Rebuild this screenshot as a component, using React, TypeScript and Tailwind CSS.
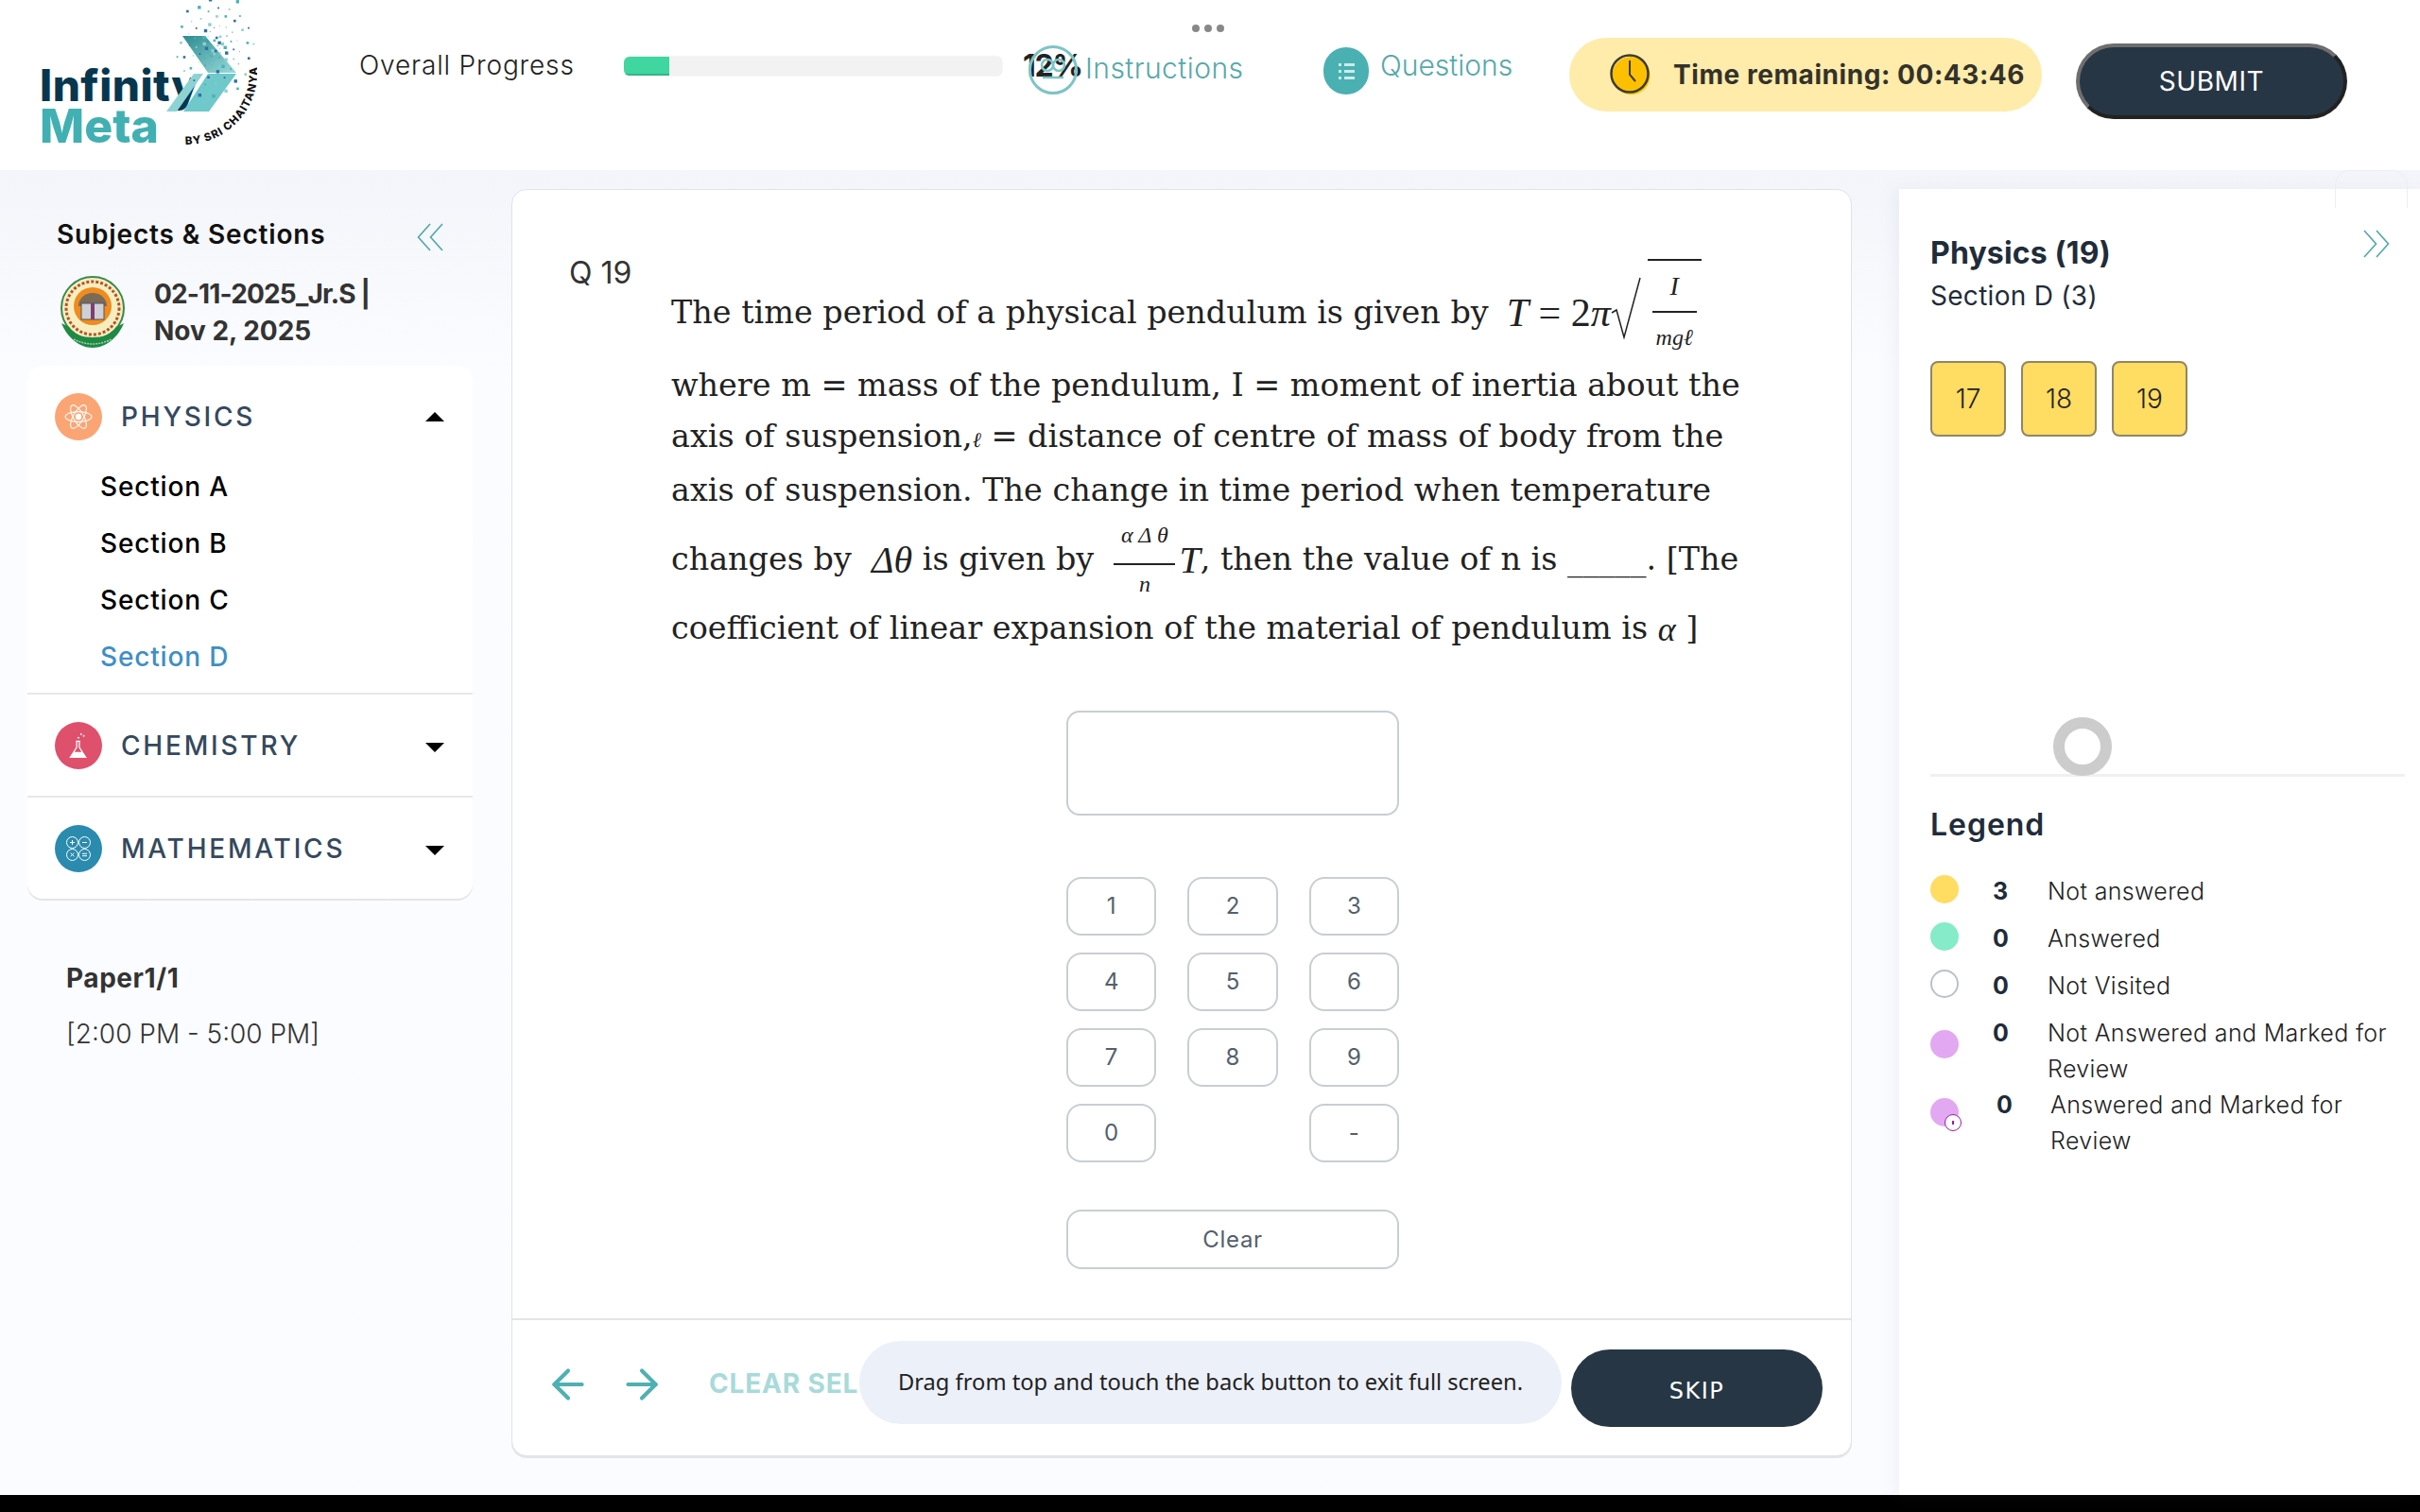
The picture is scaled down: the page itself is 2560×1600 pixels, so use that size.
import { ArrowLeft, ArrowRight } from "lucide-react";

const keys = ["1", "2", "3", "4", "5", "6", "7", "8", "9", "0", "", "-"];

const particles = Array.from({ length: 90 }, (_, i) => {
  const a = (i * 137.5 * Math.PI) / 180;
  const r = 6 + ((i * 17) % 66);
  return {
    x: 226 + Math.cos(a) * r * 0.62,
    y: 48 + Math.sin(a) * r * 0.8,
    s: 1 + (i % 4) * 0.8,
    c: i % 3 === 0 ? "#2f6fa8" : i % 3 === 1 ? "#4bb3b5" : "#8fcfd0",
  };
});

const Logo = () => (
  <svg viewBox="40 0 232 160" className="w-[232px] h-[160px]">
    <defs>
      <linearGradient id="chev" x1="0" y1="0" x2="1" y2="1">
        <stop offset="0" stopColor="#2c8c90" />
        <stop offset="1" stopColor="#9adadb" />
      </linearGradient>
      <path id="arc" d="M196 153 A 76 76 0 0 0 272 74" />
    </defs>
    <text x="42" y="107" fontFamily="Inter, sans-serif" fontWeight="800" fontSize="46" fill="#07374f" letterSpacing="0.5">
      Infinity
    </text>
    <polygon points="193,38 217,38 250,77 220,77" fill="url(#chev)" />
    <polygon points="220,78 250,78 221,118 194,118" fill="#6fc8c9" />
    <polygon points="205,78 215,78 187,118 176,118" fill="#8ed3d3" />
    {particles.map((p, i) => (
      <rect key={i} x={p.x} y={p.y} width={p.s} height={p.s} fill={p.c} />
    ))}
    <text x="42" y="151" fontFamily="Inter, sans-serif" fontWeight="800" fontSize="50" fill="#41b0b2">
      Meta
    </text>
    <text fontFamily="Inter, sans-serif" fontWeight="800" fontSize="11.5" fill="#111" letterSpacing="1">
      <textPath href="#arc">BY SRI CHAITANYA</textPath>
    </text>
  </svg>
);

const Emblem = () => (
  <svg viewBox="0 0 72 78" className="w-[72px] h-[78px] shrink-0">
    <circle cx="36" cy="35" r="33" fill="#f7eec0" stroke="#3a8a4f" strokeWidth="2" />
    <circle cx="36" cy="35" r="28" fill="none" stroke="#b5532a" strokeWidth="3" strokeDasharray="3 2" />
    <circle cx="36" cy="33" r="20" fill="#ef8b1f" />
    <path d="M21 33a15 14 0 0 1 30 0z" fill="#7a6a58" />
    <rect x="24" y="30" width="24" height="17" fill="#cfd0d6" stroke="#555" />
    <rect x="34" y="30" width="4" height="17" fill="#7c3f72" />
    <path d="M3 51c6 15 19 26 33 26s27-11 33-26l-8 4c-6 8-14 11-25 11s-19-3-25-11z" fill="#1f8a43" />
    <path d="M16 68c6 3 13 5 20 5s14-2 20-5" fill="none" stroke="#a7d3b5" strokeWidth="1.5" strokeDasharray="2 1" />
  </svg>
);

const ChevronPair = ({ flip, className }: { flip?: boolean; className?: string }) => (
  <svg viewBox="0 0 28 30" className={`w-[28px] h-[30px] ${flip ? "-scale-x-100" : ""} ${className ?? ""}`} fill="none" stroke="#4fa8aa" strokeWidth="1.6">
    <path d="M14 1L1.5 15 14 29M27 1L14.5 15 27 29" />
  </svg>
);

const AtomIcon = () => (
  <svg viewBox="0 0 28 28" className="w-[30px] h-[30px]" fill="none" stroke="#fff" strokeWidth="1">
    <ellipse cx="14" cy="14" rx="13" ry="5" />
    <ellipse cx="14" cy="14" rx="13" ry="5" transform="rotate(60 14 14)" />
    <ellipse cx="14" cy="14" rx="13" ry="5" transform="rotate(120 14 14)" />
    <circle cx="14" cy="14" r="2.5" fill="#fff" />
  </svg>
);

const FlaskIcon = () => (
  <svg viewBox="0 0 28 32" className="w-[26px] h-[30px]" fill="none" stroke="#fff" strokeWidth="1.4">
    <path d="M11 11h5M12 11v7L5 29h17l-7-11v-7" />
    <path d="M9 24h9l4 5H5z" fill="#fff" />
    <circle cx="14" cy="7" r="1" fill="#fff" stroke="none" />
    <circle cx="17" cy="3" r="1" fill="#fff" stroke="none" />
    <circle cx="20" cy="5" r="1" fill="#fff" stroke="none" />
  </svg>
);

const MathIcon = () => (
  <svg viewBox="0 0 28 28" className="w-[28px] h-[28px]" fill="none" stroke="#fff" strokeWidth="1">
    <circle cx="7.5" cy="7.5" r="6" />
    <circle cx="20.5" cy="7.5" r="6" />
    <circle cx="7.5" cy="20.5" r="6" />
    <circle cx="20.5" cy="20.5" r="6" />
    <path d="M5 7.5h5M7.5 5v5M18 7.5h5M5.7 18.7l3.6 3.6M9.3 18.7l-3.6 3.6M18 19.3h5M18 21.7h5" />
  </svg>
);

const Subject = ({ name, color, icon, open, border, children }: { name: string; color: string; icon: React.ReactNode; open?: boolean; border?: boolean; children?: React.ReactNode }) => (
  <div className={border ? "border-b-2 border-[#e8e8e8]" : ""}>
    <div className="flex items-center h-[107px] pl-[29px] pr-[30px]">
      <div className={`w-[50px] h-[50px] rounded-full flex items-center justify-center ${color}`}>{icon}</div>
      <span className="ml-[20px] text-[28px] font-medium tracking-[0.1em] text-[#34495e] flex-1 leading-none">{name}</span>
      {open ? (
        <div className="w-0 h-0 border-x-[10px] border-x-transparent border-b-[10px] border-b-black" />
      ) : (
        <div className="w-0 h-0 border-x-[10px] border-x-transparent border-t-[10px] border-t-black mt-[4px]" />
      )}
    </div>
    {children}
  </div>
);

const Sidebar = () => (
  <aside className="w-[541px] shrink-0 pl-[29px] pr-[41px] pt-[50px]">
    <div className="flex items-center justify-between pl-[31px] pr-[31px] h-[36px]">
      <span className="text-[28px] font-semibold text-[#111] tracking-[0.03em]">Subjects &amp; Sections</span>
      <ChevronPair className="mt-[6px]" />
    </div>
    <div className="flex items-center pl-[33px] mt-[24px] gap-[29px]">
      <Emblem />
      <div className="text-[28px] font-bold text-[#333] leading-[39px] mt-[2px]">
        <span className="tracking-[-0.03em]">02-11-2025_Jr.S |</span>
        <br />
        Nov 2, 2025
      </div>
    </div>
    <div className="mt-[17px] bg-white rounded-2xl shadow-[0_2px_0_#e5e5e5]">
      <Subject name="PHYSICS" color="bg-[#fba574]" icon={<AtomIcon />} open border>
        <div className="pl-[77px] pb-[20px] mt-[3px] flex flex-col gap-[24px] text-[28px] leading-[36px] font-medium text-black tracking-[0.03em]">
          <span>Section A</span>
          <span>Section B</span>
          <span>Section C</span>
          <span className="text-[#3d8fc6]">Section D</span>
        </div>
      </Subject>
      <Subject name="CHEMISTRY" color="bg-[#de506c]" icon={<FlaskIcon />} border />
      <Subject name="MATHEMATICS" color="bg-[#2a8bae]" icon={<MathIcon />} />
    </div>
    <div className="mt-[66px] pl-[41px] text-[28px] text-[#333] leading-[36px]">
      <div className="font-bold tracking-[0.02em]">Paper1/1</div>
      <div className="mt-[23px] font-light">[2:00 PM - 5:00 PM]</div>
    </div>
  </aside>
);

const Question = () => (
  <div className="flex pl-[60px] pr-[40px] pt-[40px] h-[1194px]">
    <div className="w-[108px] pt-[30px] text-[32px] font-normal text-[#333] leading-[36px]">Q 19</div>
    <div className="flex-1">
      <div className="font-['DejaVu_Serif',serif] text-[33.4px] text-[#222] whitespace-nowrap pt-[40px]">
        <div className="h-[101px] flex items-center">
          <span>The time period of a physical pendulum is given by</span>
          <span className="font-['Liberation_Serif',serif] text-[42px] flex items-center ml-[19px]">
            <i>T</i>
            <span>&nbsp;=&nbsp;2</span>
            <i>π</i>
          </span>
          <svg viewBox="0 0 32 66" className="w-[32px] h-[66px] -mt-[12px] mr-[7px]" fill="none" stroke="#222" strokeWidth="1.5">
            <path d="M1 38l5-3 8 29L31 1" />
          </svg>
          <span className="flex flex-col items-center w-[57px] border-t-2 border-[#222] -mt-[20px] font-['Liberation_Serif',serif] italic leading-none">
            <span className="h-[53px] flex items-end pb-[12px] text-[28px]">I</span>
            <span className="w-[47px] h-[2px] bg-[#222]" />
            <span className="h-[38px] flex items-end text-[24px]">mgℓ</span>
          </span>
        </div>
        <div className="h-[53px] flex items-center">where m = mass of the pendulum, I = moment of inertia about the</div>
        <div className="h-[55px] flex items-center">
          axis of suspension,<i className="text-[22px] font-['Liberation_Serif',serif] mt-[6px]">ℓ</i>&nbsp;= distance of centre of mass of body from the
        </div>
        <div className="h-[59px] flex items-center">axis of suspension. The change in time period when temperature</div>
        <div className="h-[87px] flex items-center">
          <span>changes by&nbsp;&nbsp;</span>
          <i className="font-['Liberation_Serif',serif] text-[40px]">Δθ</i>
          <span>&nbsp;is given by&nbsp;&nbsp;</span>
          <span className="flex flex-col items-center w-[65px] -mt-[12px] font-['Liberation_Serif',serif] italic text-[24px] leading-none">
            <span className="h-[60px] flex items-center whitespace-pre">α Δ θ</span>
            <span className="w-full h-[2px] bg-[#222]" />
            <span className="h-[40px] flex items-center">n</span>
          </span>
          <i className="font-['Liberation_Serif',serif] text-[40px] ml-[4px]">T</i>
          <span>, then the value of n is _____. [The</span>
        </div>
        <div className="h-[59px] flex items-center">
          coefficient of linear expansion of the material of pendulum is&nbsp;<i className="font-['Liberation_Serif',serif] text-[36px]">α</i>&nbsp;]
        </div>
      </div>
      <div className="ml-[418px] mt-[57px] w-[352px]">
        <div className="h-[111px] rounded-[14px] border-2 border-[#c8ced2]" />
        <div className="mt-[65px] grid grid-cols-3 gap-x-[33px] gap-y-[18px]">
          {keys.map((k, i) =>
            k === "" ? (
              <span key={i} />
            ) : (
              <button key={i} className="h-[62px] rounded-[16px] border-2 border-[#c8ced2] text-[24px] text-[#54606c]">
                {k}
              </button>
            ),
          )}
        </div>
        <button className="mt-[50px] w-full h-[63px] rounded-[16px] border-2 border-[#c8ced2] text-[24px] text-[#54606c] tracking-[0.03em]">Clear</button>
      </div>
    </div>
  </div>
);

const BottomBar = () => (
  <div className="flex-1 border-t-2 border-[#e5e5e5] flex items-center pl-[34px]">
    <ArrowLeft className="w-[50px] h-[50px] text-[#4fb0b2] -mt-[7px]" strokeWidth={2} />
    <ArrowRight className="w-[50px] h-[50px] text-[#4fb0b2] ml-[28px] -mt-[7px]" strokeWidth={2} />
    <div className="ml-[46px] w-[159px] whitespace-nowrap text-[28px] font-bold text-[#a8dada] tracking-[0.03em] -mt-[10px]">CLEAR SEL</div>
    <div className="w-[743px] h-[88px] rounded-full bg-[#ecf0f8] flex items-center justify-center font-['Noto_Sans',sans-serif] text-[23.7px] text-[#222] mb-[12px]">
      Drag from top and touch the back button to exit full screen.
    </div>
    <button className="ml-[10px] w-[266px] h-[82px] rounded-full bg-[#263644] text-white font-['DejaVu_Sans',sans-serif] text-[24px] tracking-[0.06em] pt-[6px]">SKIP</button>
  </div>
);

const LegendRow = ({ dot, n, h, children }: { dot: string; n: string; h: string; children: React.ReactNode }) => (
  <div className={`flex items-start ${h}`}>
    <span className={`w-[30px] h-[30px] rounded-full shrink-0 mt-[2px] ${dot}`} />
    <span className="w-[40px] ml-[36px] font-bold text-[#1f2c3a]">{n}</span>
    <span className="ml-[18px]">{children}</span>
  </div>
);

const RightPanel = () => (
  <aside className="relative flex-1 ml-[50px] mt-[20px] bg-white pl-[33px] pr-[16px] pt-[48px] shadow-[-6px_0_16px_rgba(120,130,160,0.08)]">
    <div className="absolute right-[13px] -top-[20px] w-[77px] h-[40px] rounded-t-2xl border border-[#eee] border-b-0" />
    <div className="flex justify-between pr-[16px]">
      <div className="text-[32px] font-bold text-[#1f2c3a] leading-[40px] tracking-[0.005em]">Physics (19)</div>
      <ChevronPair flip className="-mt-[5px]" />
    </div>
    <div className="text-[28px] text-[#1f2c3a] leading-[36px] mt-[7px] tracking-[0.01em]">Section D (3)</div>
    <div className="flex gap-[16px] mt-[51px]">
      {["17", "18", "19"].map((n) => (
        <div key={n} className="w-[80px] h-[80px] rounded-[8px] bg-[#ffdc62] border-2 border-[#8f8664] flex items-center justify-center text-[28px] font-light text-[#222]">
          {n}
        </div>
      ))}
    </div>
    <div className="h-[357px] flex items-end pl-[130px]">
      <div className="w-[62px] h-[62px] rounded-full border-[12px] border-[#cccccc] -mb-[2px]" />
    </div>
    <div className="h-[3px] bg-[#f0f0f0]" />
    <div className="mt-[31px] text-[32px] font-semibold text-[#1f2c3a] leading-[40px] tracking-[0.03em]">Legend</div>
    <div className="mt-[31px] text-[25px] font-light text-[#222] leading-[38px] tracking-[0.014em]">
      <LegendRow dot="bg-[#ffdc62]" n="3" h="h-[50px]">Not answered</LegendRow>
      <LegendRow dot="bg-[#85ebc8]" n="0" h="h-[50px]">Answered</LegendRow>
      <LegendRow dot="border-2 border-[#b9c2cc]" n="0" h="h-[50px]">Not Visited</LegendRow>
      <LegendRow dot="bg-[#e3a8f2] mt-[16px]" n="0" h="h-[76px]">Not Answered and Marked for<br />Review</LegendRow>
      <div className="flex items-start">
        <span className="relative w-[30px] h-[30px] rounded-full bg-[#e3a8f2] shrink-0 mt-[12px]">
          <span className="absolute -right-[3px] -bottom-[5px] w-[18px] h-[18px] rounded-full border border-[#9a1aa8] bg-white flex items-center justify-center">
            <span className="w-[2px] h-[4px] bg-[#9a1aa8]" />
          </span>
        </span>
        <span className="w-[40px] ml-[40px] font-bold text-[#1f2c3a]">0</span>
        <span className="ml-[17px]">Answered and Marked for<br />Review</span>
      </div>
    </div>
  </aside>
);

const App = () => {
  return (
    <div className="w-[2560px] h-[1600px] overflow-hidden flex flex-col font-['Inter',sans-serif] bg-[#f8faff]">
      <header className="h-[180px] shrink-0 bg-white flex items-start pl-[40px]">
        <Logo />
        <div className="ml-[108px] w-[280px] mt-[50px] text-[28px] font-light text-[#222] tracking-[0.03em] leading-[38px]">Overall Progress</div>
        <div className="w-[400px] h-[20px] mt-[60px] rounded-[6px] bg-[#f2f2f2] overflow-hidden shadow-[0_0_2px_#ddd]">
          <div className="w-[48px] h-full bg-[#3fd6a0] border-b-2 border-[#37b48a]" />
        </div>
        <div className="ml-[22px] mt-[50px] w-[61px] text-[32px] font-bold text-[#222] tracking-[-0.04em] leading-[40px]">12%</div>
        <div className="relative flex items-center -ml-[55px] mt-[48px] w-[312px]">
          <span className="absolute left-[173px] -top-[22px] flex gap-[5px]">
            <span className="w-[8px] h-[8px] rounded-full bg-[#888]" />
            <span className="w-[8px] h-[8px] rounded-full bg-[#888]" />
            <span className="w-[8px] h-[8px] rounded-full bg-[#888]" />
          </span>
          <span className="w-[52px] h-[52px] rounded-full border-[3px] border-[#7cc4c5] flex items-center justify-center">
            <svg viewBox="0 0 30 30" className="w-[30px] h-[30px]" fill="none" stroke="#7cc4c5" strokeWidth="2.5">
              <circle cx="9" cy="10" r="6" />
              <circle cx="21" cy="10" r="6" />
              <path d="M4 23h22" />
            </svg>
          </span>
          <span className="ml-[8px] text-[30px] font-light text-[#56a9ab] tracking-[0.015em] -mt-[4px]">Instructions</span>
        </div>
        <div className="flex items-start mt-[50px] w-[260px]">
          <span className="w-[48px] h-[50px] rounded-full bg-[#4ab0b2] flex flex-col items-center justify-center gap-[4px] shrink-0">
            {[0, 1, 2].map((i) => (
              <span key={i} className="flex gap-[3px]">
                <span className="w-[3px] h-[3px] bg-[#cdebec]" />
                <span className="w-[11px] h-[3px] bg-[#cdebec]" />
              </span>
            ))}
          </span>
          <span className="ml-[12px] text-[30px] font-light text-[#56a9ab] leading-[38px]">Questions</span>
        </div>
        <div className="mt-[40px] w-[500px] h-[78px] rounded-full bg-[#ffecaa] flex items-center pl-[43px]">
          <svg viewBox="0 0 44 46" className="w-[44px] h-[46px]">
            <circle cx="22.5" cy="24" r="20" fill="#fcc000" />
            <circle cx="21" cy="22" r="19.5" fill="none" stroke="#3a3a30" strokeWidth="2.5" />
            <path d="M21 8v15l6 7" fill="none" stroke="#3a3a30" strokeWidth="2" />
          </svg>
          <span className="ml-[23px] text-[28px] font-bold text-[#33322a] tracking-[0.02em] whitespace-nowrap">Time remaining: 00:43:46</span>
        </div>
        <button className="ml-[36px] mt-[46px] w-[287px] h-[80px] rounded-full bg-[#263644] border-[4px] border-t-[#6e6e6e] border-l-[#6e6e6e] border-r-[#222] border-b-[#222] text-[28px] text-white tracking-[0.02em]">
          SUBMIT
        </button>
      </header>
      <div className="flex-1 flex min-h-0 bg-gradient-to-b from-[#f3f5fa] to-[#fbfcff] to-[15%]">
        <Sidebar />
        <main className="w-[1418px] shrink-0 mt-[20px] mb-[41px] bg-white rounded-2xl border border-[#dfe3e8] shadow-[0_2px_0_#e5e5e5] flex flex-col">
          <Question />
          <BottomBar />
        </main>
        <RightPanel />
      </div>
      <div className="h-[18px] bg-black shrink-0" />
    </div>
  );
};

export default App;
